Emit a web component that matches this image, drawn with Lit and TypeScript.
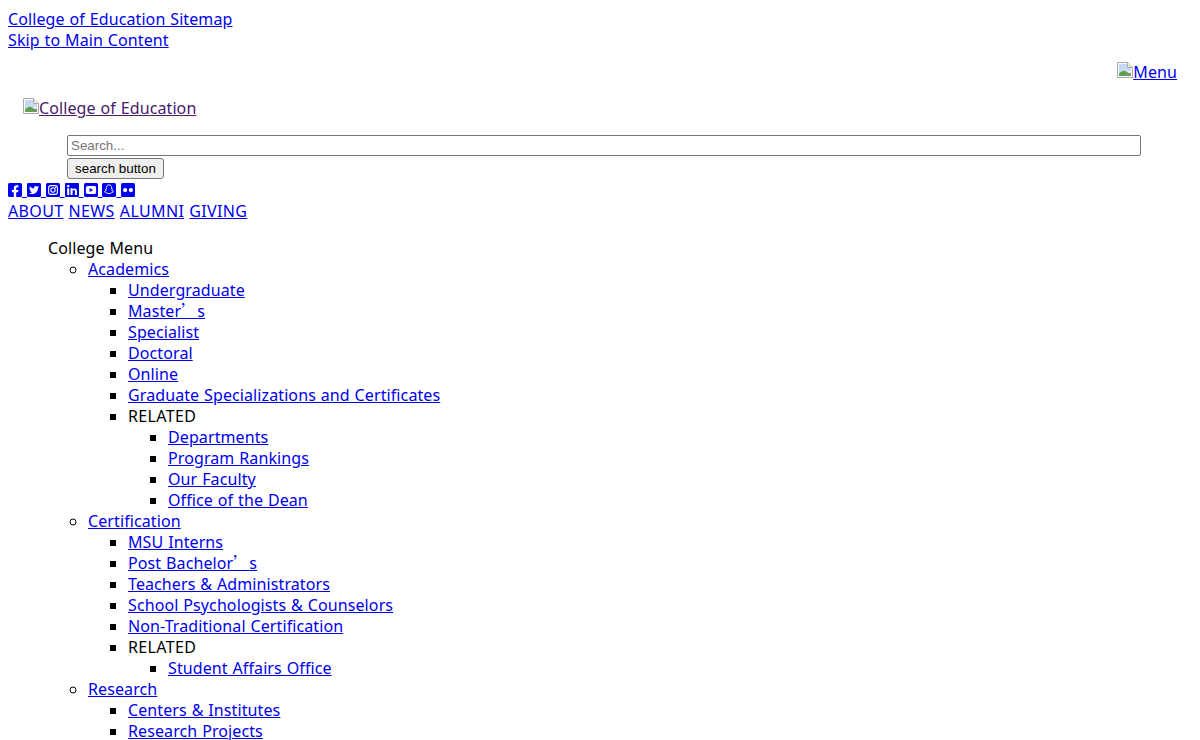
import { LitElement, html, css, svg } from "lit";
import { customElement } from "lit/decorators.js";

type Item = { t: string; link?: boolean; kids?: Item[] };
const a = (t: string, kids?: Item[]): Item => ({ t, link: true, kids });
const p = (t: string, kids?: Item[]): Item => ({ t, link: false, kids });

const MENU: Item[] = [
  p("College Menu", [
    a("Academics", [
      a("Undergraduate"), a("Master’s"), a("Specialist"), a("Doctoral"), a("Online"),
      a("Graduate Specializations and Certificates"),
      p("RELATED", [a("Departments"), a("Program Rankings"), a("Our Faculty"), a("Office of the Dean")]),
    ]),
    a("Certification", [
      a("MSU Interns"), a("Post Bachelor’s"), a("Teachers & Administrators"),
      a("School Psychologists & Counselors"), a("Non-Traditional Certification"),
      p("RELATED", [a("Student Affairs Office")]),
    ]),
    a("Research", [a("Centers & Institutes"), a("Research Projects")]),
  ]),
];

const SOCIAL = [
  svg`<path d="M400 32H48A48 48 0 0 0 0 80v352a48 48 0 0 0 48 48h137.25V327.69h-63V256h63v-54.64c0-62.15 37-96.48 93.67-96.48 27.14 0 55.52 4.84 55.52 4.84v61h-31.27c-30.81 0-40.42 19.12-40.42 38.73V256h68.78l-11 71.69h-57.78V480H400a48 48 0 0 0 48-48V80a48 48 0 0 0-48-48z"/>`,
  svg`<path d="M400 32H48C21.5 32 0 53.5 0 80v352c0 26.5 21.5 48 48 48h352c26.5 0 48-21.5 48-48V80c0-26.5-21.5-48-48-48zm-48.9 158.8c.2 2.8.2 5.7.2 8.5 0 86.7-66 186.6-186.6 186.6-37.2 0-71.7-10.8-100.7-29.4 5.3.6 10.4.8 15.8.8 30.7 0 58.9-10.4 81.4-28-28.8-.6-53-19.5-61.3-45.5 10.1 1.5 19.2 1.5 29.6-1.2-30-6.1-52.5-32.5-52.5-64.4v-.8c8.7 4.9 18.9 7.9 29.6 8.3a65.447 65.447 0 0 1-29.2-54.6c0-12.2 3.2-23.4 8.9-33.1 32.3 39.8 80.8 65.8 135.2 68.6-9.3-44.5 24-80.6 64-80.6 18.9 0 35.9 7.9 47.9 20.7 14.8-2.8 29-8.3 41.6-15.8-4.9 15.2-15.1 28-28.6 36 13.1-1.4 25.8-5.1 37.6-10.2-8.9 13.1-20.1 24.7-32.9 34z"/>`,
  svg`<rect y="32" width="448" height="448" rx="48"/><rect x="84" y="116" width="280" height="280" rx="72" fill="none" stroke="#fff" stroke-width="34"/><circle cx="224" cy="256" r="70" fill="none" stroke="#fff" stroke-width="34"/><circle cx="306" cy="174" r="20" fill="#fff"/>`,
  svg`<path d="M416 32H31.9C14.3 32 0 46.5 0 64.3v383.4C0 465.5 14.3 480 31.9 480H416c17.6 0 32-14.5 32-32.3V64.3c0-17.8-14.4-32.3-32-32.3zM135.4 416H69V202.2h66.5V416zm-33.2-243c-21.3 0-38.5-17.3-38.5-38.5S80.9 96 102.2 96c21.2 0 38.5 17.3 38.5 38.5 0 21.3-17.2 38.5-38.5 38.5zm282.1 243h-66.4V312c0-24.8-.5-56.7-34.5-56.7-34.6 0-39.9 27-39.9 54.9V416h-66.4V202.2h63.7v29.2h.9c8.9-16.8 30.6-27.3 63-27.3 67.2 0 79.7 44.3 79.7 101.9V416z"/>`,
  svg`<rect y="32" width="448" height="448" rx="48"/><rect x="60" y="130" width="328" height="252" rx="56" fill="#fff"/><path d="M178 192l112 64-112 64z"/>`,
  svg`<rect y="32" width="448" height="448" rx="48"/><path d="M224 92c-50 0-84 36-84 88v42l-30 14 26 20c-6 26-30 46-56 54 12 20 34 18 56 30 16 16 44 30 88 30s72-14 88-30c22-12 44-10 56-30-26-8-50-28-56-54l26-20-30-14v-42c0-52-34-88-84-88z" fill="none" stroke="#fff" stroke-width="30" stroke-linejoin="round"/>`,
  svg`<rect y="32" width="448" height="448" rx="48"/><circle cx="132" cy="256" r="68" fill="#fff"/><circle cx="316" cy="256" r="68" fill="#fff"/>`,
];

const BROKEN = html`<svg class="broken" viewBox="0 0 16 16" width="16" height="16" aria-hidden="true">
  <path d="M.5.5h10l5 5v10H.5z" fill="#fff" stroke="#a9a9a9"/>
  <path d="M10.5.5v5h5" fill="#e8e8e8" stroke="#a9a9a9"/>
  <path d="M2 2h8v4h4v3L2 11z" fill="#c9d8f2"/>
  <path d="M2 14v-2.5c3-3 5-3.5 7-2 2 1 3 2 5 1V14z" fill="#58a34a"/>
  <path d="M5 14c2-2 5-3 9-3v3z" fill="#8a8a8a" opacity=".55"/>
</svg>`;

@customElement("app-root")
export class AppRoot extends LitElement {
  static styles = css`
    :host { display: block; height: 740px; overflow: hidden; background: #fff; }
    .page {
      width: 1169px; padding: 9px 8px 8px; color: #000;
      font: 16px/21px "Noto Sans", "Noto Sans CJK SC", sans-serif;
      letter-spacing: 0.1px; word-spacing: 0.6px;
    }
    a { color: #0000ee; text-decoration: underline; }
    .cjk { font-family: "Noto Sans CJK SC", sans-serif; line-height: 0; }
    .caps { letter-spacing: 0.35px; }
    .menu-row { display: flex; justify-content: flex-end; margin-top: 11px; }
    .logo { padding: 15px 0 0 15px; }
    .logo a { color: #46206b; }
    .broken { vertical-align: 1px; margin-bottom: -1px; }
    .search { padding: 16px 36px 0 59px; }
    .search-input {
      display: block; box-sizing: border-box; width: 100%; height: 21px; margin: 0 0 2px; padding: 1px 3px;
      border: 1px solid #767676; border-radius: 2px; background: #fff;
      font: 13.33px "Liberation Sans", Arial, sans-serif;
      letter-spacing: normal; word-spacing: normal;
    }
    .search-input::placeholder { color: #757575; }
    .search-btn {
      display: block; box-sizing: border-box; width: 97px; height: 21px; padding: 1px 6px;
      border: 1px solid #767676; border-radius: 3px; background: #efefef; color: #000;
      font: 13.33px "Liberation Sans", Arial, sans-serif;
      letter-spacing: normal; word-spacing: normal;
    }
    .social { height: 22px; padding-top: 1px; box-sizing: border-box; }
    .social svg { width: 14px; height: 16px; fill: #0000ee; vertical-align: -2px; }
    ul { margin: 0; padding: 0 0 0 40px; }
    .l0 { margin-top: 16px; list-style: none; }
    .l1 { list-style: circle; }
    .l2, .l3 { list-style: square; }
  `;

  private label(t: string) {
    if (t === "RELATED") return html`<span class="caps">${t}</span>`;
    const parts = t.split("’");
    return parts.length === 2 ? html`${parts[0]}<span class="cjk" lang="zh-CN">’</span>${parts[1]}` : t;
  }

  private renderList(items: Item[], depth: number): unknown {
    return html`<ul class="l${depth}">
      ${items.map(
        (i) => html`<li>
          ${i.link ? html`<a href="#">${this.label(i.t)}</a>` : this.label(i.t)}
          ${i.kids ? this.renderList(i.kids, depth + 1) : ""}
        </li>`
      )}
    </ul>`;
  }

  render() {
    return html`<div class="page">
      <div><a href="#">College of Education Sitemap</a><br /><a href="#">Skip to Main Content</a></div>
      <div class="menu-row"><a href="#">${BROKEN}Menu</a></div>
      <div class="logo"><a href="#">${BROKEN}College of Education</a></div>
      <div class="search">
        <input class="search-input" placeholder="Search..." />
        <button class="search-btn">search button</button>
      </div>
      <div class="social">
        ${SOCIAL.map((s) => html`<a href="#"><svg viewBox="0 0 448 512">${s}</svg> </a>`)}
      </div>
      <div class="caps"><a href="#">ABOUT</a> <a href="#">NEWS</a> <a href="#">ALUMNI</a> <a href="#">GIVING</a></div>
      ${this.renderList(MENU, 0)}
    </div>`;
  }
}
